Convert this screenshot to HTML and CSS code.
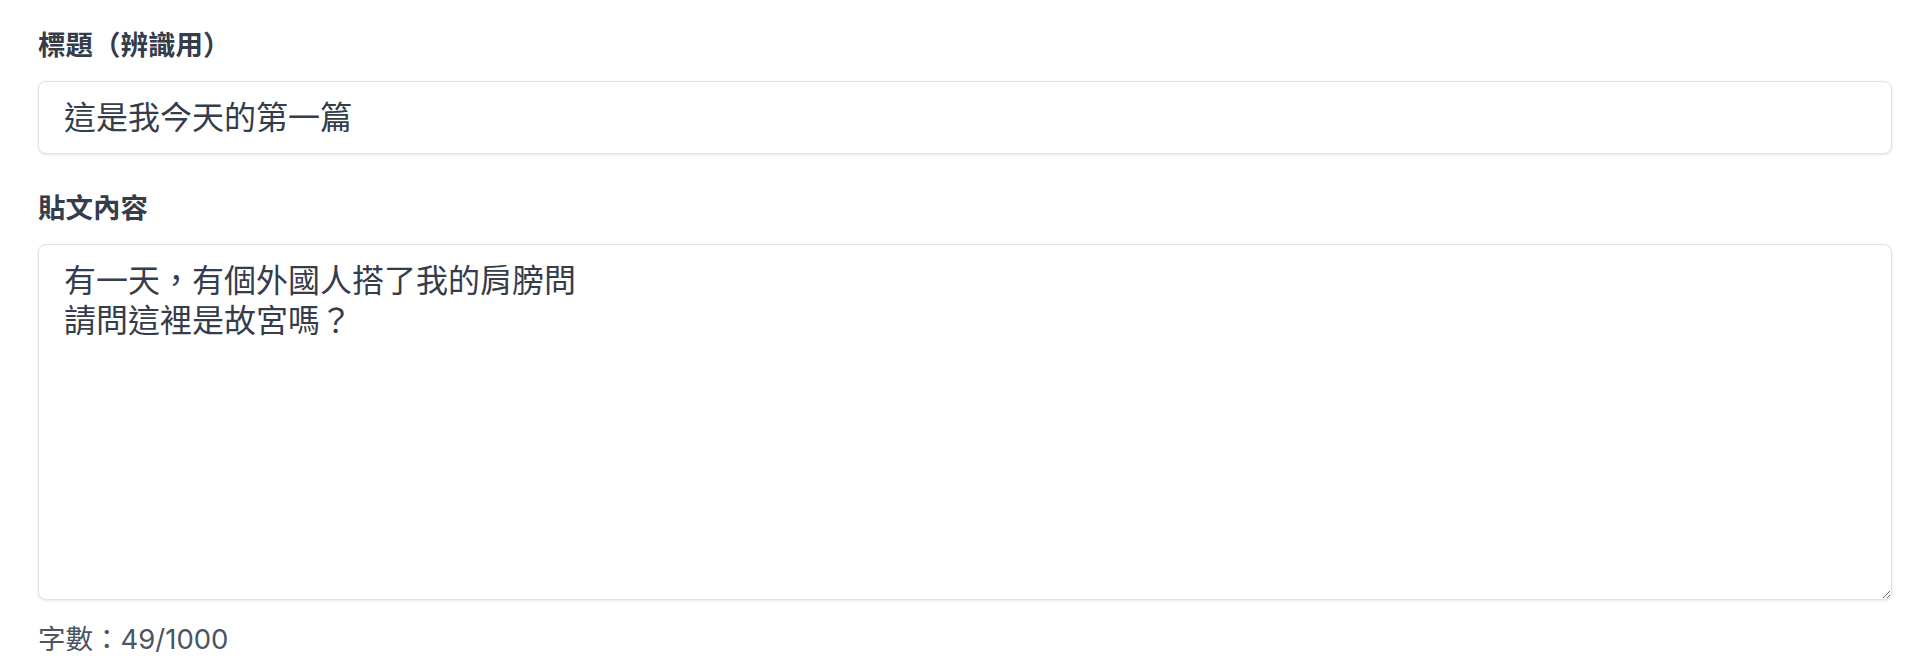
FILE: index.html
```html
<!DOCTYPE html>
<html lang="zh-Hant">
<head>
  <meta charset="UTF-8" />
  <meta name="viewport" content="width=device-width, initial-scale=1.0"/>
  <title>新增貼文</title>
  <link rel="stylesheet" href="styles.css">
</head>
<body>

  <form class="post-form">
    <!-- Title -->
    <div class="field">
      <label class="field-label" for="title">標題（辨識用）</label>
      <input class="field-input" type="text" id="title" value="這是我今天的第一篇">
    </div>

    <!-- Content -->
    <div class="field">
      <label class="field-label" for="content">貼文內容</label>
      <textarea class="field-input field-textarea" id="content">有一天，有個外國人搭了我的肩膀問
請問這裡是故宮嗎？</textarea>
      <p class="counter">字數：49/1000</p>
    </div>
  </form>

</body>
</html>
```

FILE: styles.css
```css
body, html {
  margin: 0;
  background: #ffffff;
  font-family: Inter, "Noto Sans CJK TC", "Noto Sans", sans-serif;
}

.post-form {
  padding: 24px 30px 0 38px;
}

.field {
  margin-bottom: 33px;
}

.field-label {
  display: block;
  font-family: "Noto Sans CJK TC", sans-serif;
  font-size: 27.5px;
  line-height: 38px;
  font-weight: 700;
  color: #353c4a;
  margin-bottom: 19px;
}

.field-input {
  display: block;
  box-sizing: border-box;
  width: 100%;
  margin: 0;
  padding: 16px 25px;
  font-family: inherit;
  font-size: 32px;
  line-height: 39px;
  color: #353c4a;
  background: #ffffff;
  border: 1px solid #e1e2e7;
  border-radius: 8px;
  box-shadow: 0 1px 3px rgba(0, 0, 0, 0.1);
  outline: none;
}

.field-textarea {
  height: 356px;
  padding-top: 16px;
  line-height: 40px;
  resize: vertical;
}

.counter {
  margin: 20px 0 0;
  font-size: 27.5px;
  line-height: 38px;
  color: #4b5563;
}
```
